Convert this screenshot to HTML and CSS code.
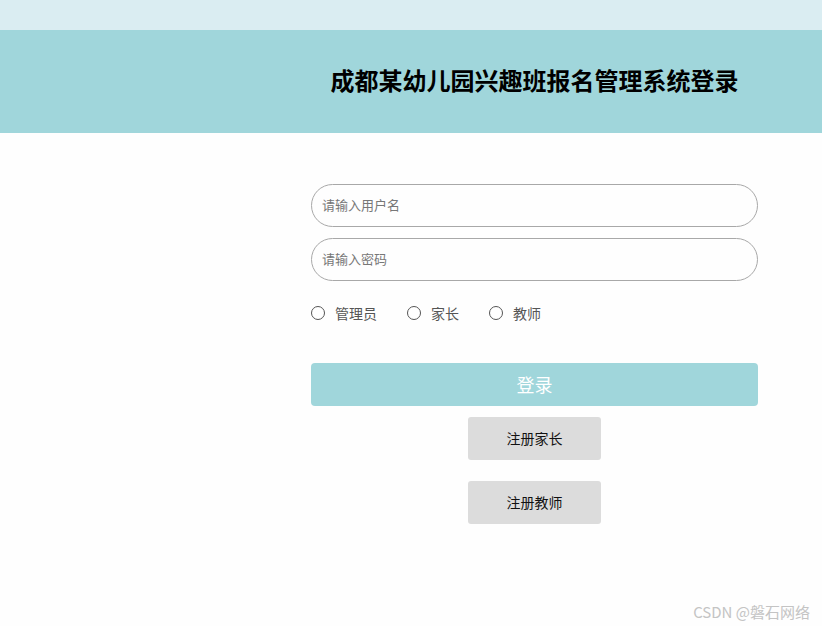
FILE: index.html
```html
<!DOCTYPE html>
<html lang="zh">
<head>
<meta charset="utf-8">
<title>登录</title>
<link rel="stylesheet" href="styles.css">
</head>
<body>
<div class="topband"></div>
<header class="header">
  <div class="col">
    <h1 class="title">成都某幼儿园兴趣班报名管理系统登录</h1>
  </div>
</header>
<main class="col form">
  <input class="field" type="text" placeholder="请输入用户名">
  <input class="field" type="password" placeholder="请输入密码">
  <div class="roles">
    <label class="role"><span class="radio"></span>管理员</label>
    <label class="role"><span class="radio"></span>家长</label>
    <label class="role"><span class="radio"></span>教师</label>
  </div>
  <button class="login">登录</button>
  <button class="reg">注册家长</button>
  <button class="reg reg2">注册教师</button>
</main>
<div class="watermark">CSDN @磐石网络</div>
</body>
</html>
```
FILE: styles.css
```css
* { box-sizing: border-box; }
html, body { margin: 0; padding: 0; }
body {
  width: 822px;
  height: 626px;
  background: #fefefe;
  font-family: "Noto Sans CJK SC", "Noto Sans", sans-serif;
  position: relative;
  overflow: hidden;
}
.topband { height: 30px; background: #daedf2; }
.header {
  height: 103px;
  background: #a0d6db;
  display: flex;
  align-items: center;
}
.col { width: 447px; margin-left: 311px; }
.title {
  margin: 0 0 4px;
  text-align: center;
  font-size: 24px;
  font-weight: 700;
  color: #000;
}
.form {
  display: flex;
  flex-direction: column;
  align-items: center;
  padding-top: 51px;
}
.field {
  width: 447px;
  height: 43px;
  border: 1px solid #a8a8a8;
  border-radius: 22px;
  padding: 0 10px 2px;
  font-family: inherit;
  font-size: 13px;
  color: #333;
  background: #fefefe;
  outline: none;
}
.field + .field { margin-top: 11px; }
.field::placeholder { color: #777; }
.roles {
  align-self: stretch;
  display: flex;
  margin-top: 21px;
  height: 22px;
  align-items: center;
}
.role {
  display: flex;
  align-items: center;
  font-size: 14px;
  color: #555;
  margin-right: 30px;
}
.radio {
  width: 14px;
  height: 14px;
  border: 1px solid #555;
  border-radius: 50%;
  margin-right: 10px;
  background: #fff;
}
.login {
  width: 447px;
  height: 43px;
  margin-top: 39px;
  border: none;
  border-radius: 4px;
  background: #a0d6db;
  color: #fff;
  font-family: inherit;
  font-size: 18px;
  padding-bottom: 3px;
}
.reg {
  width: 133px;
  height: 43px;
  margin-top: 11px;
  border: none;
  border-radius: 3px;
  background: #dcdcdc;
  color: #111;
  font-family: inherit;
  font-size: 14px;
  padding-bottom: 2px;
}
.reg2 { margin-top: 21px; }
.watermark {
  position: absolute;
  right: 12px;
  bottom: 4px;
  font-size: 15px;
  color: #c4c4c4;
}
```
